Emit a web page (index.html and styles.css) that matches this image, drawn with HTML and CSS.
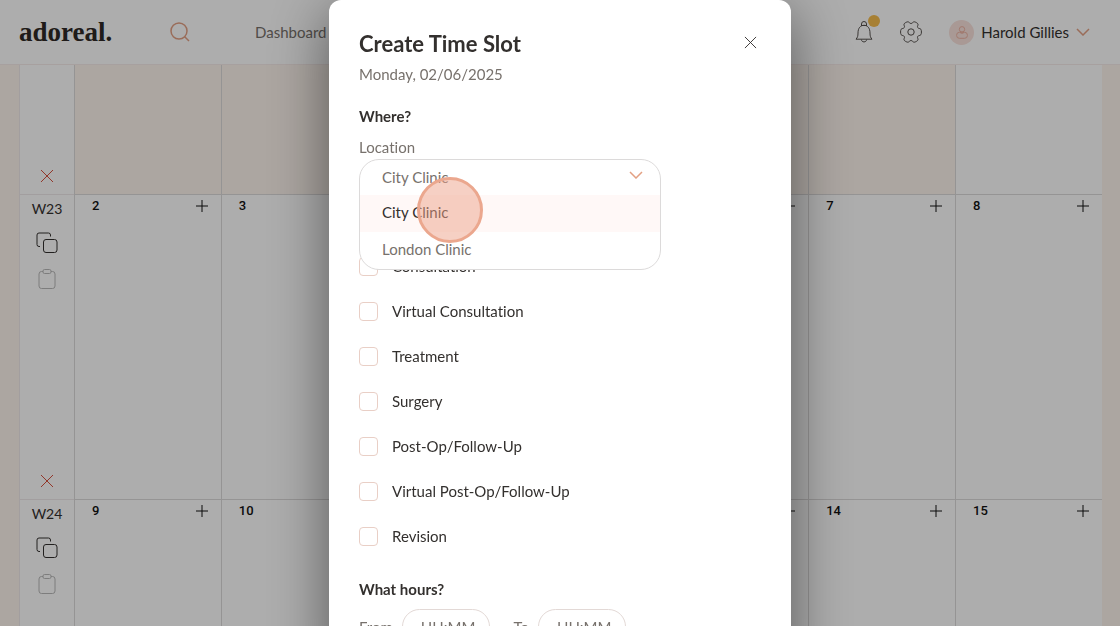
FILE: index.html
```html
<!doctype html>
<html lang="en">
  <head>
    <meta charset="UTF-8" />
    <meta name="viewport" content="width=device-width, initial-scale=1" />
    <title>adoreal. - Calendar</title>
    <link rel="stylesheet" href="styles.css">
  </head>

  <body>
    <!-- Shared icons -->
    <svg class="sprite" aria-hidden="true">
      <symbol id="icon-x" viewBox="0 0 14 14">
        <path d="M1 1l12 12M13 1L1 13" />
      </symbol>
      <symbol id="icon-plus" viewBox="0 0 12 12">
        <path d="M6 0v12M0 6h12" />
      </symbol>
      <symbol id="icon-chevron" viewBox="0 0 14 8">
        <path d="M1 1l6 6 6-6" />
      </symbol>
      <symbol id="icon-copy" viewBox="0 0 22 22">
        <path d="M14.500 4.500V3a2 2 0 0 0-2-2H3a2 2 0 0 0-2 2v9.500a2 2 0 0 0 2 2h1" />
        <rect x="7.500" y="7.500" width="13.500" height="13" rx="2.500" />
      </symbol>
      <symbol id="icon-clipboard" viewBox="0 0 18 20">
        <path d="M5 2.500H3.500a2.500 2.500 0 0 0-2.500 2.500v12a2.500 2.500 0 0 0 2.500 2.500h11a2.500 2.500 0 0 0 2.500-2.500V5a2.500 2.500 0 0 0-2.500-2.500H13" />
        <rect x="5" y=".5" width="8" height="4" rx="1.500" />
      </symbol>
    </svg>

    <header class="topbar">
      <a class="logo" href="#">adoreal.</a>
      <button class="icon-btn search" type="button" aria-label="Search">
        <svg width="20" height="20" viewBox="0 0 20 20">
          <circle cx="9" cy="9" r="8" />
          <path d="M14.700 14.700l4.300 4.300" />
        </svg>
      </button>
      <nav class="nav">
        <a href="#">Dashboard</a>
      </nav>
      <div class="user-tools">
        <button class="icon-btn bell" type="button" aria-label="Notifications">
          <svg width="18" height="22" viewBox="0 0 18 22">
            <path d="M6.500 4.500V3a2.500 2.500 0 0 1 5 0v1.500M6 4.500h6" />
            <path d="M1 18.200c1.500-1.700 2-3 2-6.200 0-5 2.500-7.700 6-7.700s6 2.700 6 7.700c0 3.200.5 4.500 2 6.200z" />
            <path d="M6.300 18.500c.3 1.600 1.300 2.400 2.700 2.400s2.400-.8 2.700-2.400" />
          </svg>
          <span class="badge"></span>
        </button>
        <button class="icon-btn" type="button" aria-label="Settings">
          <svg width="22" height="22" viewBox="0 0 22 22">
            <path d="M11 2.500C12.500 2.500 12.700 .8 14.200 .8C15.200 .8 17.800 2.100 18 3.200C18.300 4.500 17 5.200 17.700 6.500C18.400 7.800 20 7.100 20.900 8.300C21.600 9.300 21.600 12.700 20.900 13.700C20 14.900 18.400 14.200 17.700 15.500C17 16.800 18.300 17.500 18 18.800C17.800 19.900 15.200 21.200 14.200 21.200C12.700 21.200 12.500 19.500 11 19.500C9.500 19.500 9.300 21.200 7.800 21.200C6.800 21.200 4.200 19.900 4 18.800C3.700 17.500 5 16.800 4.300 15.500C3.600 14.200 2 14.900 1.100 13.700C.4 12.700 .4 9.300 1.100 8.300C2 7.100 3.600 7.800 4.300 6.500C5 5.200 3.700 4.500 4 3.200C4.200 2.100 6.800 .8 7.800 .8C9.300 .8 9.500 2.500 11 2.500z" />
            <circle cx="11" cy="11" r="3.200" />
          </svg>
        </button>
        <button class="account" type="button">
          <span class="avatar">
            <svg width="12" height="13" viewBox="0 0 12 13">
              <circle cx="6" cy="3.300" r="2.700" />
              <rect x=".6" y="6.300" width="10.800" height="6" rx="2.800" />
              <path d="M4 6.300c.8 1.300 3.200 1.300 4 0" />
            </svg>
          </span>
          Harold Gillies
          <svg class="chevron" width="14" height="8"><use href="#icon-chevron" /></svg>
        </button>
      </div>
    </header>

    <main class="page">
      <table class="calendar">
        <tr class="previous">
          <td class="week">
            <div class="week-tools">
              <button class="icon-btn clear" type="button" aria-label="Clear week"><svg width="14" height="14"><use href="#icon-x" /></svg></button>
            </div>
          </td>
          <td class="past"></td>
          <td class="past"></td>
          <td class="past"></td>
          <td class="past"></td>
          <td class="past"></td>
          <td class="past"></td>
          <td></td>
        </tr>
        <tr>
          <td class="week">
            <div class="week-tools">
              <span>W23</span>
              <button class="icon-btn" type="button" aria-label="Copy week"><svg width="22" height="22"><use href="#icon-copy" /></svg></button>
              <button class="icon-btn paste" type="button" aria-label="Paste week" disabled><svg width="18" height="20"><use href="#icon-clipboard" /></svg></button>
              <button class="icon-btn clear" type="button" aria-label="Clear week"><svg width="14" height="14"><use href="#icon-x" /></svg></button>
            </div>
          </td>
          <td><div class="day">2 <button class="icon-btn" type="button" aria-label="Add slot"><svg width="12" height="12"><use href="#icon-plus" /></svg></button></div></td>
          <td><div class="day">3</div></td>
          <td></td>
          <td></td>
          <td><div class="day add-only"><button class="icon-btn" type="button" aria-label="Add slot"><svg width="12" height="12"><use href="#icon-plus" /></svg></button></div></td>
          <td><div class="day">7 <button class="icon-btn" type="button" aria-label="Add slot"><svg width="12" height="12"><use href="#icon-plus" /></svg></button></div></td>
          <td><div class="day">8 <button class="icon-btn" type="button" aria-label="Add slot"><svg width="12" height="12"><use href="#icon-plus" /></svg></button></div></td>
        </tr>
        <tr>
          <td class="week">
            <div class="week-tools">
              <span>W24</span>
              <button class="icon-btn" type="button" aria-label="Copy week"><svg width="22" height="22"><use href="#icon-copy" /></svg></button>
              <button class="icon-btn paste" type="button" aria-label="Paste week" disabled><svg width="18" height="20"><use href="#icon-clipboard" /></svg></button>
            </div>
          </td>
          <td><div class="day">9 <button class="icon-btn" type="button" aria-label="Add slot"><svg width="12" height="12"><use href="#icon-plus" /></svg></button></div></td>
          <td><div class="day">10</div></td>
          <td></td>
          <td></td>
          <td><div class="day add-only"><button class="icon-btn" type="button" aria-label="Add slot"><svg width="12" height="12"><use href="#icon-plus" /></svg></button></div></td>
          <td><div class="day">14 <button class="icon-btn" type="button" aria-label="Add slot"><svg width="12" height="12"><use href="#icon-plus" /></svg></button></div></td>
          <td><div class="day">15 <button class="icon-btn" type="button" aria-label="Add slot"><svg width="12" height="12"><use href="#icon-plus" /></svg></button></div></td>
        </tr>
      </table>
    </main>

    <!-- Create time slot -->
    <div class="overlay">
      <form class="modal" role="dialog" aria-labelledby="modalTitle">
        <div class="modal-header">
          <h1 id="modalTitle">Create Time Slot</h1>
          <button class="icon-btn" type="button" aria-label="Close"><svg width="13" height="13"><use href="#icon-x" /></svg></button>
        </div>
        <p class="date">Monday, 02/06/2025</p>

        <h2>Where?</h2>
        <label class="field-label" for="location">Location</label>
        <div class="dropdown">
          <select id="location" name="location">
            <option>City Clinic</option>
          </select>
          <svg class="chevron" width="14" height="8"><use href="#icon-chevron" /></svg>
          <ul class="dropdown-menu" role="listbox">
            <li class="active" role="option" aria-selected="true">City Clinic</li>
            <li role="option">London Clinic</li>
          </ul>
          <span class="click-ring"></span>
        </div>

        <div class="types">
          <label><input type="checkbox" name="type" /> Consultation</label>
          <label><input type="checkbox" name="type" /> Virtual Consultation</label>
          <label><input type="checkbox" name="type" /> Treatment</label>
          <label><input type="checkbox" name="type" /> Surgery</label>
          <label><input type="checkbox" name="type" /> Post-Op/Follow-Up</label>
          <label><input type="checkbox" name="type" /> Virtual Post-Op/Follow-Up</label>
          <label><input type="checkbox" name="type" /> Revision</label>
        </div>

        <h2>What hours?</h2>
        <div class="hours">
          <label for="from">From</label>
          <input type="text" id="from" placeholder="HH:MM" />
          <span>-</span>
          <label for="to">To</label>
          <input type="text" id="to" placeholder="HH:MM" />
        </div>
      </form>
    </div>
  </body>
</html>
```

FILE: styles.css
```css
* {
  box-sizing: border-box;
}

body {
  margin: 0;
  height: 100vh;
  overflow: hidden;
  font-family: Lato, "Liberation Sans", sans-serif;
  font-size: 15px;
  font-variant-ligatures: none;
  line-height: 20px;
  color: #33302e;
  background-color: #fef5ee;
}

h1,
h2,
p,
ul {
  margin: 0;
  padding: 0;
}

button,
input,
select {
  font: inherit;
  color: inherit;
}

svg {
  display: block;
  fill: none;
  stroke: currentColor;
}

.sprite {
  position: absolute;
  width: 0;
  height: 0;
}

.icon-btn {
  display: flex;
  padding: 0;
  border: none;
  background: none;
  cursor: pointer;
}

.chevron {
  color: #e3a083;
  stroke-width: 1.5;
}

/* Top bar */
.topbar {
  display: flex;
  align-items: center;
  height: 65px;
  padding: 0 30px 0 19px;
  border-bottom: 1px solid #f7ecea;
  background-color: #fff;
}

.logo {
  width: 151px;
  font-family: "Liberation Serif", serif;
  font-size: 27px;
  font-weight: bold;
  color: #2e2826;
  text-decoration: none;
}

.search {
  width: 85px;
  color: #e3a083;
  stroke-width: 1.5;
}

.nav a {
  color: #77716c;
  text-decoration: none;
}

.user-tools {
  display: flex;
  align-items: center;
  gap: 27px;
  margin-left: auto;
  color: #55504d;
}

.bell {
  position: relative;
}

.badge {
  position: absolute;
  top: -6px;
  right: -7px;
  width: 12px;
  height: 12px;
  border-radius: 50%;
  background-color: #f7bd4d;
}

.account {
  display: flex;
  align-items: center;
  gap: 7px;
  padding: 0;
  border: none;
  background: none;
  color: #33302e;
}

.avatar {
  display: grid;
  place-items: center;
  width: 25px;
  height: 25px;
  border-radius: 50%;
  background-color: #f9e2dc;
  color: #eeb3a3;
}

/* Calendar */
.page {
  padding: 0 18px 0 19px;
}

.calendar {
  width: 100%;
  table-layout: fixed;
  border-collapse: separate;
  border-spacing: 0;
  background-color: #fff;
}

.calendar td {
  height: 305px;
  padding: 0;
  border-left: 1px solid #dcdada;
  border-bottom: 1px solid #dcdada;
  vertical-align: top;
}

.calendar .previous td {
  height: 130px;
}

.calendar .past {
  background-color: #fef5ee;
}

.calendar .week {
  width: 55px;
  border-color: #efe9ea;
}

.week-tools {
  display: flex;
  flex-direction: column;
  align-items: center;
  gap: 13px;
  height: 100%;
  padding: 4px 0 11px;
  font-size: 14px;
}

.week-tools .paste {
  margin-top: 2px;
  color: #b8b8b8;
}

.week-tools .clear {
  margin-top: auto;
  color: #d8523f;
}

.day {
  display: flex;
  align-items: center;
  justify-content: space-between;
  padding: 1px 13px 0 17px;
  font-family: Roboto, "Liberation Sans", sans-serif;
  font-size: 13px;
  font-weight: 500;
  color: #111;
}

.add-only {
  justify-content: flex-end;
  min-height: 21px;
}

/* Modal */
.overlay {
  position: fixed;
  inset: 0;
  display: flex;
  justify-content: center;
  align-items: flex-start;
  overflow: hidden;
  background-color: rgba(0, 0, 0, 0.32);
}

.modal {
  width: 462px;
  padding: 32px 30px 30px;
  border-radius: 12px;
  background-color: #fff;
  box-shadow: 0 12px 60px rgba(0, 0, 0, 0.5);
}

.modal-header {
  display: flex;
  align-items: flex-start;
  justify-content: space-between;
  padding-right: 4px;
}

.modal-header .icon-btn {
  padding-top: 4px;
}

.modal h1 {
  font-size: 22px;
  line-height: 24px;
}

.modal h2 {
  font-size: 15px;
}

.date {
  margin: 8px 0 22px;
  color: #77716c;
}

.field-label {
  display: block;
  margin-top: 11px;
  color: #77716c;
}

.dropdown {
  position: relative;
  width: 302px;
  height: 36px;
  margin: 2px 0 61px;
  color: #77716c;
}

.dropdown select {
  position: relative;
  z-index: 2;
  width: 100%;
  height: 35px;
  padding: 0 23px;
  border: none;
  background: none;
  appearance: none;
}

.dropdown .chevron {
  position: absolute;
  z-index: 2;
  top: 12px;
  right: 18px;
}

.dropdown-menu {
  position: absolute;
  z-index: 1;
  top: 0;
  left: 0;
  width: 100%;
  padding-top: 35px;
  border: 1px solid #dcdada;
  border-radius: 20px;
  background-color: #fff;
  list-style: none;
}

.dropdown-menu li {
  padding: 7px 22px 10px;
}

.dropdown-menu .active {
  color: #33302e;
  background-color: #fff8f7;
}

.click-ring {
  position: absolute;
  z-index: 3;
  top: 18px;
  left: 58px;
  width: 66px;
  height: 66px;
  border: 3px solid #eba78e;
  border-radius: 50%;
  background-color: rgba(238, 162, 138, 0.5);
}

.types {
  display: flex;
  flex-direction: column;
  gap: 25px;
  margin-bottom: 33px;
}

.types label {
  display: flex;
  align-items: center;
  gap: 14px;
}

.types input {
  width: 19px;
  height: 19px;
  margin: 0;
  border: 1px solid #e9cfc6;
  border-radius: 4px;
  background-color: #fff;
  appearance: none;
}

.hours {
  display: flex;
  align-items: center;
  gap: 9px;
  margin-top: 10px;
  color: #77716c;
}

.hours input {
  width: 88px;
  height: 35px;
  padding: 0 10px 0 18px;
  border: 1px solid #e3d9d6;
  border-radius: 18px;
}

.hours input::placeholder {
  color: #77716c;
}
```
